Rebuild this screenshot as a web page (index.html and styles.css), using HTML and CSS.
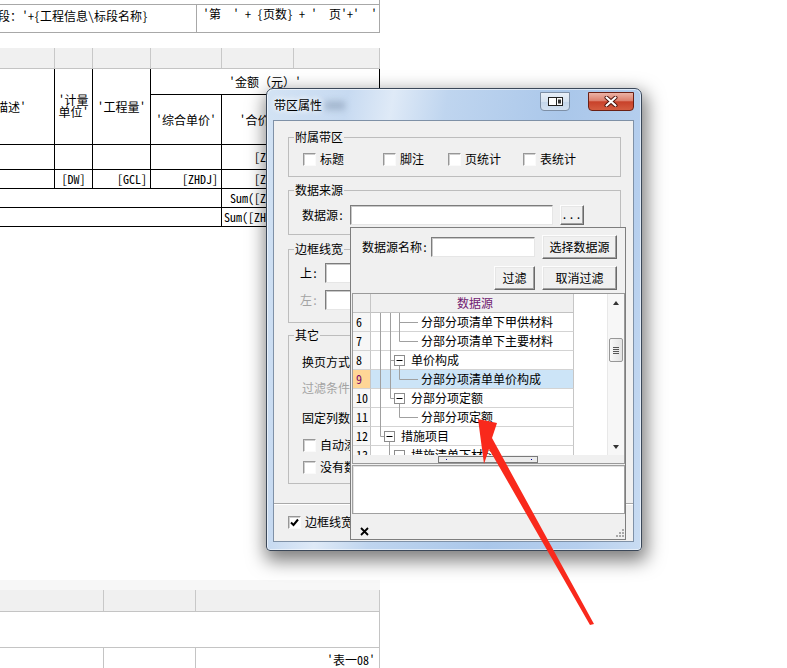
FILE: index.html
```html
<!DOCTYPE html>
<html lang="zh-CN">
<head>
<meta charset="utf-8">
<title>带区属性</title>
<link rel="stylesheet" href="styles.css">
</head>
<body>
<div class="sheet">
  <div class="r0"></div>
  <div class="rA">
    <div class="cA1"><span class="shift">段：'+{工程信息\标段名称}</span></div>
    <div class="cA2">'第  ' + {页数} + '  页'+'  '</div>
  </div>
  <div class="gap1"></div>
  <div class="band band-top cols6"><span></span><span></span><span></span><span></span><span></span><span></span></div>
  <div class="thead cols6">
    <div class="th th-ms"><span>描述'</span></div>
    <div class="th th-dw">'计量<br>单位'</div>
    <div class="th th-gcl">'工程量'</div>
    <div class="th th-je">'金额（元）'</div>
    <div class="th">'综合单价'</div>
    <div class="th">'合价'</div>
    <div class="th"></div>
  </div>
  <div class="trow tr-a cols6">
    <span class="td"></span><span class="td"></span><span class="td"></span><span class="td"></span><span class="td r">[ZHHJ]</span><span class="td"></span>
  </div>
  <div class="trow tr-b cols6">
    <span class="td"></span><span class="td">[DW]</span><span class="td r">[GCL]</span><span class="td r">[ZHDJ]</span><span class="td r">[ZHHJ]</span><span class="td"></span>
  </div>
  <div class="trow tr-b cols6">
    <span class="td span4"></span><span class="td r">Sum([ZHJ])</span><span class="td"></span>
  </div>
  <div class="trow tr-b cols6">
    <span class="td span4"></span><span class="td r">Sum([ZHHJ])</span><span class="td"></span>
  </div>
  <div class="gap2"></div>
  <div class="strip"></div>
  <div class="band band-bot cols3"><span></span><span></span><span></span></div>
  <div class="rbig"></div>
  <div class="rlast cols3"><span></span><span></span><span class="r">'表一08'</span></div>
</div>

<div class="dlg">
  <div class="titlebar">
    <span class="title">带区属性</span><span class="glow"></span>
    <span class="tbtn tb-min">
      <svg width="15" height="9" viewBox="0 0 15 9"><rect x="0.5" y="0.5" width="14" height="8" fill="#fff" stroke="#222"/><line x1="8.5" y1="0.5" x2="8.5" y2="8.5" stroke="#222"/><rect x="10" y="2.5" width="3" height="4" fill="#333"/></svg>
    </span>
    <span class="tbtn tb-close">
      <svg width="14" height="11" viewBox="0 0 14 11"><path d="M2.5 1.5 L11.5 9.5 M11.5 1.5 L2.5 9.5" stroke="#4a1008" stroke-width="4" stroke-linecap="round"/><path d="M2.5 1.5 L11.5 9.5 M11.5 1.5 L2.5 9.5" stroke="#fff" stroke-width="2.2" stroke-linecap="round"/></svg>
    </span>
  </div>
  <div class="client">
    <fieldset class="grp g1">
      <legend>附属带区</legend>
      <div class="gin1">
        <label class="cb"><i class="box"></i>标题</label>
        <label class="cb cb2"><i class="box"></i>脚注</label>
        <label class="cb cb3"><i class="box"></i>页统计</label>
        <label class="cb cb4"><i class="box"></i>表统计</label>
      </div>
    </fieldset>
    <fieldset class="grp g2">
      <legend>数据来源</legend>
      <div class="gin2">
        <span class="lbl-ds">数据源:</span><span class="inp inp-ds"></span><span class="btn btn-dots">...</span>
      </div>
    </fieldset>
    <fieldset class="grp g3">
      <legend>边框线宽</legend>
      <div class="gin3">
        <div class="frow"><span class="flbl">上:</span><span class="inp inp-sm"></span></div>
        <div class="frow frow2"><span class="flbl dis">左:</span><span class="inp inp-sm"></span></div>
      </div>
    </fieldset>
    <fieldset class="grp g4">
      <legend>其它</legend>
      <div class="gin4">
        <div class="orow">换页方式</div>
        <div class="orow orow2 dis">过滤条件</div>
        <div class="orow orow3">固定列数</div>
        <label class="cb ocb1"><i class="box"></i>自动添加空行</label>
        <label class="cb ocb2"><i class="box"></i>没有数据时打印</label>
      </div>
    </fieldset>
    <div class="sep"></div>
    <label class="cb bcb"><i class="box checked"><svg width="11" height="11" viewBox="0 0 11 11"><path d="M2 5.5 L4.5 8 L9 2.5" fill="none" stroke="#000" stroke-width="2"/></svg></i>边框线宽固定</label>

    <div class="popup">
      <div class="prow1">
        <span class="plbl">数据源名称:</span><span class="inp inp-name"></span><span class="btn pbtn">选择数据源</span>
      </div>
      <div class="prow2">
        <span class="btn fbtn">过滤</span><span class="btn pbtn">取消过滤</span>
      </div>
      <div class="grid">
        <div class="gmain">
          <div class="gbody">
            <div class="grow ghead"><span class="gn"></span><span class="gd ghd">数据源</span></div>
            <div class="grow"><span class="gn">6</span><span class="gd"><svg width="50" height="18"><path d="M9.5 0 V19 M19.5 0 V19 M28.5 0 V19 M28.5 9.5 H47" stroke="#a0a0a0" fill="none"/></svg>分部分项清单下甲供材料</span></div>
            <div class="grow"><span class="gn">7</span><span class="gd"><svg width="50" height="18"><path d="M9.5 0 V19 M19.5 0 V19 M28.5 0 V9.5 H47" stroke="#a0a0a0" fill="none"/></svg>分部分项清单下主要材料</span></div>
            <div class="grow"><span class="gn">8</span><span class="gd"><svg width="40" height="18"><path d="M9.5 0 V19 M19.5 0 V19 M19.5 9.5 H23.5 M28.5 14.5 V19" stroke="#a0a0a0" fill="none"/><rect x="23.5" y="4.5" width="10" height="10" fill="#fff" stroke="#8c8c8c"/><path d="M25.5 9.5 H31.5" stroke="#000"/></svg>单价构成</span></div>
            <div class="grow sel"><span class="gn">9</span><span class="gd"><svg width="50" height="18"><path d="M9.5 0 V19 M19.5 0 V19 M28.5 0 V9.5 H47" stroke="#a0a0a0" fill="none"/></svg>分部分项清单单价构成</span></div>
            <div class="grow"><span class="gn">10</span><span class="gd"><svg width="40" height="18"><path d="M9.5 0 V19 M19.5 0 V9.5 H23.5 M28.5 14.5 V19" stroke="#a0a0a0" fill="none"/><rect x="23.5" y="4.5" width="10" height="10" fill="#fff" stroke="#8c8c8c"/><path d="M25.5 9.5 H31.5" stroke="#000"/></svg>分部分项定额</span></div>
            <div class="grow"><span class="gn">11</span><span class="gd"><svg width="50" height="18"><path d="M9.5 0 V19 M28.5 0 V9.5 H47" stroke="#a0a0a0" fill="none"/></svg>分部分项定额</span></div>
            <div class="grow"><span class="gn">12</span><span class="gd"><svg width="30" height="18"><path d="M9.5 0 V9.5 H13.5 M18.5 14.5 V19" stroke="#a0a0a0" fill="none"/><rect x="13.5" y="4.5" width="10" height="10" fill="#fff" stroke="#8c8c8c"/><path d="M15.5 9.5 H21.5" stroke="#000"/></svg>措施项目</span></div>
            <div class="grow"><span class="gn">13</span><span class="gd"><svg width="40" height="18"><path d="M18.5 0 V9.5 H23.5" stroke="#a0a0a0" fill="none"/><rect x="23.5" y="4.5" width="10" height="10" fill="#fff" stroke="#8c8c8c"/><path d="M25.5 9.5 H31.5" stroke="#000"/></svg>措施清单下材料</span></div>
          </div>
          <div class="vscroll">
            <span class="vs-btn vs-up"></span>
            <span class="vs-thumb"></span>
            <span class="vs-btn vs-dn"></span>
          </div>
        </div>
        <div class="hscroll"><span class="hthumb"><i></i><i></i></span></div>
      </div>
      <div class="memo"></div>
      <div class="pfoot">
        <svg class="pclose" width="9" height="9" viewBox="0 0 9 9"><path d="M1 1 L8 8 M8 1 L1 8" stroke="#000" stroke-width="1.8"/></svg>
        <svg class="grip" width="9" height="9" viewBox="0 0 9 9"><g fill="#a8a8a8"><rect x="7" y="1" width="2" height="2"/><rect x="4" y="4" width="2" height="2"/><rect x="7" y="4" width="2" height="2"/><rect x="1" y="7" width="2" height="2"/><rect x="4" y="7" width="2" height="2"/><rect x="7" y="7" width="2" height="2"/></g></svg>
      </div>
    </div>
  </div>
</div>

<svg class="arrow" width="787" height="668" viewBox="0 0 787 668"><polygon points="478,419 497,423 492,438 594,624 590,625 489,449 484,464" fill="#f9291c"/></svg>
</body>
</html>
```

FILE: styles.css
```css
* { box-sizing: border-box; }
html, body { margin: 0; padding: 0; }
body {
  position: relative;
  width: 787px;
  height: 668px;
  overflow: hidden;
  background: #fff;
  color: #000;
  font-family: "Noto Sans Mono CJK SC", "Noto Sans CJK SC", "Liberation Sans", sans-serif;
  font-size: 12px;
  line-height: 14px;
}

/* ---------- report sheet ---------- */
.sheet { width: 380px; }
.r0 { height: 4px; border-right: 1px solid #a8a8a8; }
.rA {
  display: grid;
  grid-template-columns: 197px 1fr;
  height: 29px;
  border: 1px solid #a8a8a8;
  border-left: 0;
}
.cA1 { border-right: 1px solid #a8a8a8; padding-top: 4px; white-space: nowrap; overflow: hidden; }
.shift { margin-left: -2px; }
.cA2 { padding: 2px 0 0 6px; white-space: pre; overflow: hidden; }
.gap1 { height: 15px; }
.cols6 { display: grid; grid-template-columns: 55px 38px 58px 71px 72px 86px; }
.cols3 { display: grid; grid-template-columns: 104px 92px 184px; }
.band { background: #f0f0f0; border-bottom: 1px solid #c4c4c4; }
.band span { border-right: 1px solid #c8c8c8; }
.band-top { height: 21px; }
.band-bot { height: 22px; }
.thead { grid-template-rows: 26px 50px; }
.th, .td {
  border-right: 1px solid #000;
  border-bottom: 1px solid #000;
  display: flex;
  align-items: center;
  justify-content: center;
  white-space: nowrap;
  overflow: hidden;
}
.th-ms { grid-row: 1 / 3; justify-content: flex-start; }
.th-ms span { margin-left: -4px; }
.th-dw { grid-row: 1 / 3; line-height: 12px; text-align: center; padding-bottom: 2px; }
.th-gcl { grid-row: 1 / 3; }
.th-je { grid-column: 4 / 7; }
.tr-a { height: 25px; }
.tr-b { height: 19px; }
.td.r { justify-content: flex-end; padding-right: 3px; }
.td.span4 { grid-column: 1 / 5; }
.gap2 { height: 353px; }
.strip { height: 10px; background: #f7f7f7; }
.rbig { height: 36px; border-right: 1px solid #c4c4c4; border-bottom: 1px solid #c4c4c4; }
.rlast { height: 20px; }
.rlast span { border-right: 1px solid #c4c4c4; display: flex; align-items: center; padding-top: 3px; }
.rlast .r { justify-content: flex-end; padding-right: 4px; }

/* ---------- dialog window ---------- */
.dlg {
  position: absolute;
  left: 266px;
  top: 88px;
  width: 376px;
  height: 463px;
  z-index: 5;
  border: 1px solid #3b4859;
  border-radius: 7px 7px 4px 4px;
  padding: 0 7px 8px 6px;
  background: linear-gradient(100deg, #d3e3f4 0%, #c7daf1 18%, #dfeaf7 28%, #bfd5ef 40%, #aac7ea 66%, #b6cfee 86%, #c9dcf2 100%);
  box-shadow: 2px 7px 18px 3px rgba(0, 0, 0, 0.5), inset 0 0 0 1px rgba(255, 255, 255, 0.55);
}
.titlebar { height: 31px; display: flex; align-items: flex-start; padding-left: 1px; }
.title { margin-top: 9px; line-height: 14px; text-shadow: 0 0 6px #fff, 0 0 6px #fff; }
.glow {
  width: 20px;
  height: 9px;
  margin: 12px 0 0 3px;
  background: rgba(120, 140, 165, 0.45);
  filter: blur(3px);
}
.tbtn {
  margin-top: 3px;
  height: 19px;
  display: flex;
  align-items: center;
  justify-content: center;
  border: 1px solid;
  border-radius: 0 0 4px 4px;
}
.tb-min {
  margin-left: auto;
  width: 30px;
  border-color: #7d8fa6;
  background: linear-gradient(#e8eff8, #d5e2f1 50%, #c3d5eb 51%, #d3e1f1);
}
.tb-close {
  margin-left: 18px;
  width: 46px;
  border-color: #6a1f14;
  background: linear-gradient(#ebb3a6, #dd806d 45%, #c8412a 52%, #d45c40 100%);
}

.client {
  position: relative;
  width: 361px;
  height: 422px;
  background: #f0f0f0;
  border: 1px solid #7f91a7;
  padding-top: 9px;
}
.grp {
  margin: 0 0 0 14px;
  width: 333px;
  min-width: 0;
  padding: 0;
  border: 1px solid #bdbdbd;
}
.grp legend { padding: 0 1px; margin-left: 5px; line-height: 14px; }
.g2 { margin-top: 6px; }
.g3 { margin-top: 7px; }
.g4 { margin-top: 5px; }
.gin1 { display: flex; padding: 8px 0 10px 14px; }
.gin2 { display: flex; align-items: center; height: 37px; padding: 8px 0 9px 13px; }
.gin3 { padding: 7px 0 12px 11px; }
.gin4 { padding: 10px 0 9px 13px; }

.cb { display: flex; align-items: center; height: 14px; white-space: nowrap; }
.box {
  width: 13px;
  height: 13px;
  margin-right: 4px;
  background: #fff;
  border: 1px solid;
  border-color: #979797 #fafafa #fafafa #979797;
  box-shadow: inset 1px 1px 0 #cfcfcf;
  display: flex;
  align-items: center;
  justify-content: center;
}
.box svg { display: block; }
.cb2 { margin-left: 39px; }
.cb3 { margin-left: 24px; }
.cb4 { margin-left: 22px; }

.inp {
  display: block;
  height: 20px;
  background: #fff;
  border: 1px solid;
  border-color: #7c7c7c #e6e6e6 #e6e6e6 #7c7c7c;
  box-shadow: inset 1px 1px 0 #c8c8c8;
}
.btn {
  display: flex;
  align-items: center;
  justify-content: center;
  height: 24px;
  background: #f0f0f0;
  border: 1px solid;
  border-color: #fdfdfd #6a6a6a #6a6a6a #fdfdfd;
  box-shadow: inset -1px -1px 0 #a0a0a0, inset 1px 1px 0 #e6e6e6;
  white-space: nowrap;
}
.lbl-ds { width: 48px; white-space: nowrap; }
.inp-ds { width: 203px; }
.btn-dots { width: 24px; height: 20px; margin-left: 7px; align-items: flex-end; padding-bottom: 3px; letter-spacing: 1px; }

.frow { display: flex; align-items: center; height: 20px; }
.frow2 { margin-top: 7px; }
.flbl { width: 25px; }
.inp-sm { width: 60px; }
.dis { color: #a3a3a3; }

.orow { height: 20px; display: flex; align-items: center; white-space: nowrap; }
.orow2 { margin-top: 6px; }
.orow3 { margin-top: 10px; }
.ocb1 { margin: 10px 0 0 1px; }
.ocb2 { margin: 8px 0 0 1px; }

.sep { margin-top: 19px; border-top: 1px solid #a9a9a9; border-bottom: 1px solid #fff; }
.bcb { margin: 10px 0 0 14px; }

/* ---------- drop-down panel ---------- */
.popup {
  position: absolute;
  left: 76px;
  top: 106px;
  width: 276px;
  height: 313px;
  z-index: 2;
  background: #f0f0f0;
  border: 1px solid #7e7e7e;
}
.prow1 { display: flex; align-items: center; height: 24px; margin-top: 7px; padding: 0 8px 0 11px; }
.plbl { width: 69px; white-space: nowrap; }
.inp-name { width: 104px; }
.pbtn { width: 75px; margin-left: auto; }
.prow2 { display: flex; justify-content: flex-end; gap: 7px; margin-top: 7px; padding-right: 8px; }
.prow2 .pbtn { margin-left: 0; }
.fbtn { width: 41px; }

.grid {
  width: 273px;
  height: 171px;
  margin: 3px 0 0 1px;
  border: 1px solid #9a9a9a;
  background: #fff;
}
.gmain { display: flex; height: 161px; }
.gbody { flex: 1; overflow: hidden; }
.grow { display: flex; height: 19px; }
.gn, .gd { border-bottom: 1px solid #d3d3d3; border-right: 1px solid #c6c6c6; display: flex; align-items: center; white-space: nowrap; }
.gn { width: 18px; padding-left: 3px; background: #f7f7f7; }
.gd { width: 203px; }
.gd svg { display: block; flex: none; overflow: visible; }
.ghead .gn, .ghead .gd { background: #f0f0f0; border-bottom-color: #c2c2c2; }
.ghd { justify-content: center; color: #702070; padding-left: 6px; }
.sel .gn { background: #ffd696; color: #7a0a6a; }
.sel .gd { background: #cce4f7; }

.vscroll {
  width: 17px;
  display: flex;
  flex-direction: column;
  align-items: center;
  background: #f7f7f7;
  border-left: 1px solid #e8e8e8;
}
.vs-btn { height: 17px; width: 16px; display: flex; align-items: center; justify-content: center; }
.vs-up::before { content: ""; border-left: 3.5px solid transparent; border-right: 3.5px solid transparent; border-bottom: 4px solid #333; }
.vs-dn { margin-top: auto; }
.vs-dn::before { content: ""; border-left: 3.5px solid transparent; border-right: 3.5px solid transparent; border-top: 4px solid #333; }
.vs-thumb {
  width: 14px;
  height: 24px;
  margin-top: 27px;
  border: 1px solid #979797;
  border-radius: 2px;
  background: linear-gradient(to right, #f8f8f8, #e2e2e2);
  display: flex;
  align-items: center;
  justify-content: center;
}
.vs-thumb::after { content: ""; width: 6px; height: 7px; background: repeating-linear-gradient(#555 0 1px, transparent 1px 2px); }

.hscroll { height: 8px; background: #f0f0f0; display: flex; align-items: flex-end; }
.hthumb {
  width: 100px;
  height: 7px;
  margin-left: 85px;
  border: 1px solid #7a7a7a;
  background: #ececec;
  display: flex;
  align-items: center;
  justify-content: space-between;
  padding: 0 5px 0 7px;
}
.hthumb i { width: 1px; height: 1px; background: #0000a0; }

.memo {
  width: 273px;
  height: 49px;
  margin: 1px 0 0 1px;
  background: #fff;
  border: 1px solid #a0a0a0;
  box-shadow: inset 1px 1px 0 #e2e2e2;
}
.pfoot { height: 25px; display: flex; justify-content: space-between; padding: 0 1px 0 9px; }
.pclose { margin-top: 13px; }
.grip { margin-top: 14px; }

/* ---------- annotation arrow ---------- */
.arrow { position: absolute; left: 0; top: 0; z-index: 10; pointer-events: none; }
```
